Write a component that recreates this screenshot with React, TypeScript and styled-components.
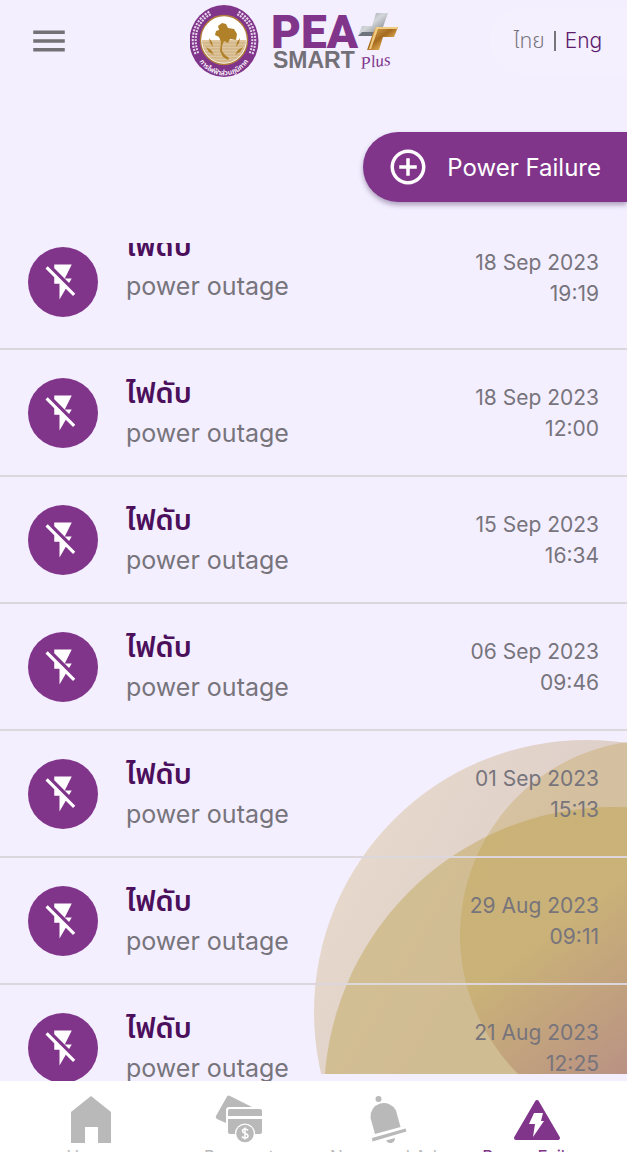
import React from "react";
import styled, { createGlobalStyle } from "styled-components";
import { MdAddCircleOutline, MdFlashOff, MdMenu } from "react-icons/md";

const purple = "#80358b";
const deepPurple = "#4c0f5b";
const grey = "#77747c";
const iconGrey = "#b9b9b9";

const GlobalStyle = createGlobalStyle`
  * { box-sizing: border-box; }
  body {
    margin: 0;
    background: #f3efff;
    color: ${grey};
    font-family: Inter, "Noto Sans Thai", "Noto Sans", sans-serif;
  }
  button { font: inherit; border: 0; padding: 0; background: none; cursor: pointer; }
`;

const Screen = styled.div`
  position: relative;
  isolation: isolate;
  display: flex;
  flex-direction: column;
  height: 100vh;
  overflow: hidden;
`;

const Header = styled.header`
  display: flex;
  justify-content: space-between;
  align-items: center;
  height: 82px;
  flex: none;
`;

const MenuButton = styled.button`
  display: grid;
  place-items: center;
  width: 98px;
  height: 82px;
  color: #737076;
`;

const LanguageSwitch = styled.div`
  display: flex;
  align-items: center;
  justify-content: center;
  gap: 9px;
  width: 138px;
  height: 66px;
  border-radius: 33px 0 0 33px;
  background: #f4f0fe;
`;

const LanguageButton = styled.button<{ $active?: boolean }>`
  font-size: 21px;
  font-weight: 300;
  line-height: 28px;
  color: ${(p) => (p.$active ? "#5d1d6c" : grey)};
`;

const LanguageDivider = styled.span`
  width: 2px;
  height: 20px;
  background: ${grey};
`;

const ReportButton = styled.button`
  display: flex;
  align-items: center;
  align-self: flex-end;
  gap: 18px;
  flex: none;
  height: 70px;
  margin: 50px 0 41px;
  padding: 0 26px 0 24px;
  border-radius: 35px 0 0 35px;
  background: ${purple};
  box-shadow: 0 3px 5px rgba(70, 40, 90, 0.4);
  color: #fff;
  font-size: 24px;
`;

const OutageList = styled.ul`
  flex: 1;
  min-height: 0;
  margin: 0;
  padding: 0;
  list-style: none;
  overflow-y: auto;
  scrollbar-width: none;
`;

const Row = styled.li<{ $scrolled?: boolean }>`
  display: flex;
  align-items: center;
  gap: 28px;
  height: ${(p) => (p.$scrolled ? 107 : 127)}px;
  padding: 0 28px ${(p) => (p.$scrolled ? 28 : 0)}px;
  border-bottom: 2px solid #dbd7dc;
`;

const RowIcon = styled.span`
  display: grid;
  place-items: center;
  flex: none;
  width: 70px;
  height: 70px;
  border-radius: 50%;
  background: ${purple};
  color: #fff;
`;

const RowText = styled.div<{ $scrolled?: boolean }>`
  flex: 1;
  padding-bottom: ${(p) => (p.$scrolled ? 32 : 0)}px;
`;

const RowTitle = styled.h2`
  margin: 0;
  color: ${deepPurple};
  font-size: 29px;
  font-weight: 600;
  line-height: 40px;
`;

const RowSubtitle = styled.p`
  margin: 0;
  font-size: 25px;
  line-height: 40px;
`;

const RowDate = styled.time<{ $scrolled?: boolean }>`
  display: flex;
  flex-direction: column;
  padding-bottom: ${(p) => (p.$scrolled ? 8 : 0)}px;
  font-size: 21px;
  line-height: 31px;
  text-align: right;
`;

const Nav = styled.nav`
  display: grid;
  grid-template-columns: repeat(4, 1fr);
  flex: none;
  height: 71px;
  padding: 0 16px;
  background: #fff;
  overflow: hidden;
`;

const NavItem = styled.a<{ $active?: boolean }>`
  display: flex;
  flex-direction: column;
  align-items: center;
  gap: 2px;
  padding-top: 14px;
  color: ${(p) => (p.$active ? purple : iconGrey)};
  font-size: 17px;
  line-height: 24px;
  text-decoration: none;
  white-space: nowrap;
  svg { flex: none; }
`;

const Backdrop = styled.svg`
  position: absolute;
  right: 0;
  bottom: 78px;
  z-index: -1;
`;

const CircleArt = () => (
  <Backdrop width="313" height="334" viewBox="314 740 313 334" aria-hidden="true">
    <defs>
      <linearGradient id="outer" gradientUnits="userSpaceOnUse" x1="340" y1="880" x2="480" y2="960">
        <stop offset="0" stopColor="#e6d8cb" />
        <stop offset="1" stopColor="#dfd0ca" />
      </linearGradient>
      <linearGradient id="inner" gradientUnits="userSpaceOnUse" x1="530" y1="880" x2="660" y2="1050">
        <stop offset="0" stopColor="#b8962e" />
        <stop offset="0.25" stopColor="#b8962e" />
        <stop offset="1" stopColor="#7c1f5c" />
      </linearGradient>
    </defs>
    <circle cx="586" cy="1012" r="272" fill="url(#outer)" />
    <circle cx="614" cy="1097" r="290" fill="#c2a85b" opacity="0.5" />
    <circle cx="655" cy="935" r="195" fill="url(#inner)" opacity="0.27" />
  </Backdrop>
);

const Logo = () => (
  <svg width="208" height="82" viewBox="190 0 208 82" role="img" aria-label="PEA Smart Plus">
    <defs>
      <linearGradient id="silver" x1="0" y1="0" x2="1" y2="1">
        <stop offset="0" stopColor="#777c83" />
        <stop offset="0.45" stopColor="#d5d8db" />
        <stop offset="1" stopColor="#646970" />
      </linearGradient>
      <linearGradient id="gold" x1="0" y1="0" x2="1" y2="1">
        <stop offset="0" stopColor="#e5b45f" />
        <stop offset="0.45" stopColor="#a46a20" />
        <stop offset="0.7" stopColor="#e0ab50" />
        <stop offset="1" stopColor="#885313" />
      </linearGradient>
      <clipPath id="sealClip"><ellipse cx="224" cy="40" rx="22" ry="23" /></clipPath>
      <path id="sealArc" d="M195 50 A29.500 31 0 0 0 253 50" />
    </defs>
    <ellipse cx="224" cy="41" rx="34.5" ry="36" fill={purple} />
    <path d="M210 13C197 20 190 36 197 54M238 13C251 20 258 36 251 54" fill="none" stroke="#e6d5eb" strokeWidth="5" strokeDasharray="2 1.2" />
    <path d="M210 13C197 20 190 36 197 54M238 13C251 20 258 36 251 54" fill="none" stroke={purple} strokeWidth="0.9" />
    <ellipse cx="224" cy="40" rx="23.5" ry="24.5" fill="#fff" stroke="#b07a3a" strokeWidth="1.4" />
    <g clipPath="url(#sealClip)">
      <rect x="200" y="40" width="48" height="25" fill="#dec79f" />
      <path d="M200 43h48M200 46h48M200 49h48M200 52h48M200 55h48M200 58h48M200 61h48" stroke="#c5a06a" strokeWidth="0.7" />
    </g>
    <path d="M218 26l4-3 4 1 2 4 6 1 3 5-1 6-6-1-2 4-4-2-2 5 0 5 3 4 4 3-1 2-5-3-3-6 1-9-2-5-4-2 1-4 3-1z" fill="#b1812a" />
    <path d="M209 38l3 4 1 5-3-4zM206 47l5 3 3 5-5-3zM240 38l-3 4-1 5 3-4zM243 47l-5 3-3 5 5-3z" fill="#b1812a" />
    <text fill="#fff" fontSize="7" fontWeight="600" fontFamily='"Noto Sans Thai", sans-serif'>
      <textPath href="#sealArc" startOffset="50%" textAnchor="middle">การไฟฟ้าส่วนภูมิภาค</textPath>
    </text>
    <text x="271" y="48" fill={purple} fontSize="46" fontWeight="900" fontFamily="Roboto, sans-serif">PEA</text>
    <text x="273" y="68" fill="#737177" fontSize="23" fontWeight="700" fontFamily='"Liberation Sans", sans-serif'>SMART</text>
    <path d="M376 13h12l-5 14h-7l-3 9h-15l4-10h10z" fill="url(#silver)" />
    <path d="M359 35l3-3h13l-2 4h-15z" fill="#6c737b" />
    <path d="M376 27h22l-4 10h-11l-4 13h-12l6-17z" fill="url(#gold)" />
    <path d="M376 27h22l-1 2h-19l-7 20h-2z" fill="#f1cb80" />
    <text transform="rotate(-8 361 68)" x="361" y="69" fill={purple} fontSize="17" fontStyle="italic" fontFamily='"Liberation Serif", serif'>Plus</text>
  </svg>
);

const HomeIcon = () => (
  <svg width="48" height="48" viewBox="0 0 48 48" aria-hidden="true">
    <path d="M25 1l20 16v31H32V32H19v16H5V17z" fill="currentColor" />
  </svg>
);

const PaymentIcon = () => (
  <svg width="48" height="48" viewBox="0 0 48 48" aria-hidden="true">
    <path d="M12 1.5Q13 0 15 1L37 12H14Q11 12 11 15V28L2 24Q0 23 1 21z" fill="currentColor" />
    <path d="M15 14H45Q47 14 47 16V21H13V16Q13 14 15 14zM13 24H47V37Q47 39 45 39H40A10 10 0 0 0 20 39H15Q13 39 13 37z" fill="currentColor" />
    <circle cx="30" cy="38.5" r="10" fill="#fff" />
    <circle cx="30" cy="38.5" r="8.8" fill="currentColor" />
    <path d="M33 35.5Q32 34 30 34Q27.5 34 27.5 36C27.5 39 33 37.5 33 41Q33 43 30 43Q28 43 27 41.5M30 32.5V44.5" fill="none" stroke="#fff" strokeWidth="1.6" />
  </svg>
);

const BellIcon = () => (
  <svg width="48" height="48" viewBox="0 0 48 48" aria-hidden="true" fill="currentColor">
    <circle cx="14.5" cy="4" r="3" />
    <path d="M11 39L6.500 23A13.500 13.500 0 0 1 32 15.500L36.500 32z" />
    <path d="M8 43L41.500 33.500L42.500 36.500L8.500 46.500z" />
    <path d="M22 45.500L31 43Q31 47 27.500 48Q24 48.500 22 45.500z" />
  </svg>
);

const FailureIcon = () => (
  <svg width="48" height="48" viewBox="0 0 48 48" aria-hidden="true">
    <path d="M24 7L45 43H3z" fill="currentColor" stroke="currentColor" strokeWidth="4" strokeLinejoin="round" />
    <path d="M21 18h9l-2 8h3L20 42l2-13h-6z" fill="#fff" />
  </svg>
);

const outages = [
  ["18 Sep 2023", "19:19"],
  ["18 Sep 2023", "12:00"],
  ["15 Sep 2023", "16:34"],
  ["06 Sep 2023", "09:46"],
  ["01 Sep 2023", "15:13"],
  ["29 Aug 2023", "09:11"],
  ["21 Aug 2023", "12:25"],
];

const tabs = [
  { label: "Home", icon: <HomeIcon /> },
  { label: "Payment", icon: <PaymentIcon /> },
  { label: "News and Ads", icon: <BellIcon /> },
  { label: "Power Failure", icon: <FailureIcon />, active: true },
];

export default function App() {
  return (
    <Screen>
      <GlobalStyle />
      <CircleArt />
      <Header>
        <MenuButton aria-label="Menu"><MdMenu size={42} /></MenuButton>
        <Logo />
        <LanguageSwitch>
          <LanguageButton>ไทย</LanguageButton>
          <LanguageDivider />
          <LanguageButton $active>Eng</LanguageButton>
        </LanguageSwitch>
      </Header>
      <ReportButton>
        <MdAddCircleOutline size={42} />
        Power Failure
      </ReportButton>
      <OutageList>
        {outages.map(([date, time], i) => (
          <Row key={date + time} $scrolled={i === 0}>
            <RowIcon><MdFlashOff size={42} /></RowIcon>
            <RowText $scrolled={i === 0}>
              <RowTitle>ไฟดับ</RowTitle>
              <RowSubtitle>power outage</RowSubtitle>
            </RowText>
            <RowDate $scrolled={i === 0}>
              <span>{date}</span>
              <span>{time}</span>
            </RowDate>
          </Row>
        ))}
      </OutageList>
      <Nav>
        {tabs.map((tab) => (
          <NavItem key={tab.label} href="#" $active={tab.active}>
            {tab.icon}
            {tab.label}
          </NavItem>
        ))}
      </Nav>
    </Screen>
  );
}
